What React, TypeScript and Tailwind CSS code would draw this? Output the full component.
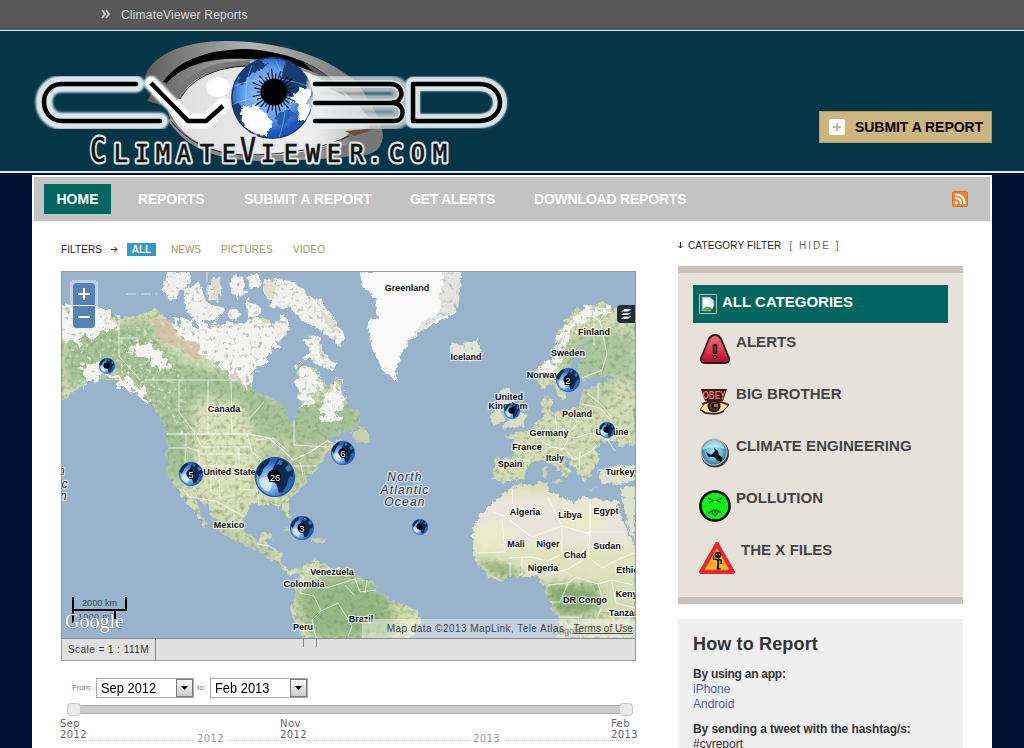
import React from "react";

const navItems = [
  { label: "REPORTS", width: "w-[106px]", tracking: "tracking-[-.2px]" },
  { label: "SUBMIT A REPORT", width: "w-[166px]", tracking: "tracking-[-.07px]" },
  { label: "GET ALERTS", width: "w-[124px]", tracking: "tracking-[-.3px]" },
  { label: "DOWNLOAD REPORTS", width: "w-[200px]", tracking: "tracking-[-.2px]" },
];

const letters: [string, number, number][] = [
  ["C", 98, 33], ["L", 121, 25], ["I", 142, 25], ["M", 163, 25], ["A", 184, 25], ["T", 207, 25],
  ["E", 229, 25], ["V", 248, 33], ["I", 268, 25], ["E", 291, 25], ["W", 313, 25], ["E", 334, 25],
  ["R", 357, 25], [".", 375, 25], ["C", 396, 25], ["O", 418, 25], ["M", 440, 25],
];

function Globe({ x, y, r, label }: { x: number; y: number; r: number; label?: string }) {
  return (
    <g transform={`translate(${x} ${y}) scale(${r / 20})`}>
      <circle r="19.5" fill="url(#globe)" stroke="#2350a0" strokeWidth="1.2" />
      <path d="M-19-4-16-11-10-17-5-18-6-14-11-9-13-4-16 0ZM0-13 3-18 9-17 14-13 18-6 18 0 15-1 13 3 12 8 8 15 4 16 2 9 0 5-3 3-4-4Z" fill="#0d2a50" />
      <path d="M14-13 17-7 13-5 10-9ZM4-17 8-16 6-12 2-13Z" fill="#3973b8" />
      <path d="M-16 2-9 0-4 4-3 9-6 15-11 13-15 8Z" fill="#e2f2ff" opacity=".75" />
      <circle cx="-1" cy="-1" r={label ? 6.5 : 8} fill="#010409" />
      {label ? (
        <text transform={`scale(${20 / r})`} y="3.5" textAnchor="middle" fontSize="9.5" fill="#fff" stroke="#000" strokeWidth="2" paintOrder="stroke" fontFamily="Liberation Sans, sans-serif">{label}</text>
      ) : null}
    </g>
  );
}

function Logo() {
  return (
    <svg className="block h-[140px] w-[520px]" viewBox="0 31 520 140">
      <defs>
        <linearGradient id="lid" x1="0" x2="1"><stop offset="0" stopColor="#5c5c5c" /><stop offset=".45" stopColor="#b4b4b4" /><stop offset=".75" stopColor="#8c8c8c" /><stop offset="1" stopColor="#666" /></linearGradient>
        <linearGradient id="white" x1="0" x2="1"><stop offset="0" stopColor="#dedede" /><stop offset=".7" stopColor="#f0f0f0" /><stop offset="1" stopColor="#b5b5b5" /></linearGradient>
        <radialGradient id="iris" cx=".45" cy=".45"><stop offset="0" stopColor="#9cc9ff" /><stop offset=".65" stopColor="#629dec" /><stop offset="1" stopColor="#1e55b8" /></radialGradient>
        <clipPath id="irisClip"><circle cx="272" cy="98" r="40" /></clipPath>
        <filter id="soft" x="-10%" y="-20%" width="120%" height="140%"><feGaussianBlur stdDeviation="1.2" /></filter>
        <filter id="rough"><feTurbulence type="fractalNoise" baseFrequency=".15" numOctaves="2" seed="2" result="n" /><feDisplacementMap in="SourceGraphic" in2="n" scale="9" xChannelSelector="R" yChannelSelector="G" /></filter>
      </defs>
      <path d="M145 76C154 52 190 40 230 41C286 42 330 59 355 81Q378 108 383 137C379 155 350 158 300 160Q215 166 184 138Q164 115 169 107L147 101 153 91Z" fill="url(#lid)" />
      <path d="M178 100C190 76 218 64 252 65C305 62 345 87 365 113Q382 130 352 130C336 151 292 158 240 157Q187 151 170 113Z" fill="url(#white)" />
      <path d="M163 82C180 57 215 49 247 49C290 52 320 66 336 84C309 67 282 60 245 59C207 57 181 67 167 83Z" fill="#000" />
      <path d="M177 98C187 76 211 64 250 63" fill="none" stroke="#777" strokeWidth="6" />
      <path d="M250 41Q276 41 299 50" fill="none" stroke="#333" strokeWidth="1" />
      <path d="M180 99C191 79 215 67 247 66" fill="none" stroke="#161616" strokeWidth="1" />
      <path d="M303 62Q329 72 346 96L332 90Z" fill="#777" opacity=".75" />
      <path d="M170 119Q191 152 239 157Q302 162 352 139" fill="none" stroke="#8c8c8c" strokeWidth="5" />
      <path d="M171 121Q195 152 242 155Q311 155 351 135" fill="none" stroke="#222" strokeWidth="1" />
      <path d="M350 132 382 128Q386 150 367 155L331 157 348 144Z" fill="#777" />
      <path d="M345 131 375 129 354 136Z" fill="#704d37" />
      <ellipse cx="218" cy="87" rx="12" ry="10" fill="#fff" />
      <circle cx="272" cy="98" r="41" fill="#1b377d" />
      <circle cx="272" cy="98" r="39.5" fill="url(#iris)" />
      <g clipPath="url(#irisClip)">
        <g filter="url(#rough)">
          <path d="M238 76 247 65 260 59 268 64 260 70 251 73 246 80 240 84ZM284 62 297 64 314 82 316 98 306 102 296 98 285 92 280 80ZM231 101 241 105 244 114 237 124 230 114Z" fill="#153d70" />
          <path d="M240 110 250 105 261 108 270 117 272 126 266 136 254 133 244 126ZM300 86 312 88 308 105 316 110 308 124 297 119 300 108 290 101Z" fill="#fff" />
          <path d="M277 114 290 108 295 113 288 122 281 127 275 121Z" fill="#2462ad" />
        </g>
        <path d="M232 87Q272 70 312 88M231 105Q270 88 315 107M252 65Q239 97 253 137M276 61Q294 98 278 141" fill="none" stroke="#d6ebff" strokeWidth=".6" opacity=".65" />
      </g>
      {Array.from({ length: 30 }, (_, i) => {
        const a = (i * Math.PI) / 15;
        const r = 17 + ((i * 7) % 5) * 1.6;
        return <path key={i} d={`M${274 + 11 * Math.cos(a)} ${92 + 11 * Math.sin(a)}L${274 + r * Math.cos(a)} ${92 + r * Math.sin(a)}`} stroke="#07142e" strokeWidth="1.2" />;
      })}
      <circle cx="274" cy="92" r="13.5" fill="#000" />
      {["M136 84H62C50 84 44 93 44 102S50 121 62 121H160", "M315 84H390C401 84 404 94 399 100C397 103 392 103 386 103H315M386 103H394C406 105 405 121 394 121H315", "M413 84H479C507 84 507 121 479 121H413V84Z"].map((d, i) => (
        <g key={i} fill="none" strokeLinecap="round" strokeLinejoin="round">
          <path d={d} stroke={i === 1 ? "#e9eeee" : "#dbe4e8"} strokeWidth={i === 2 ? "14" : "17"} opacity={i === 1 ? ".7" : "1"} filter="url(#soft)" />
          <path d={d} stroke={i === 1 ? "#e9eeee" : "#dbe4e8"} strokeWidth={i === 1 ? "8" : "14"} opacity=".7" />
          <path d={d} stroke="#000" strokeWidth="4.5" />
        </g>
      ))}
      <path d="M151 83 188 121H206L223 105" fill="none" stroke="#fff" strokeWidth="14" strokeLinecap="round" strokeLinejoin="round" filter="url(#soft)" />
      <path d="M151 83 188 121H206L223 106" fill="none" stroke="#000" strokeWidth="4.5" strokeLinejoin="round" />
      {letters.map(([c, x, s], i) => (
        <g key={i} transform={`translate(${x} 162) scale(${s > 30 ? ".8" : ".95"} 1)`} textAnchor="middle" fontSize={s} fontFamily="DejaVu Sans Mono, monospace" strokeLinejoin="round">
          <text fill="none" stroke="#dfe5e6" strokeWidth="5">{c}</text>
          <text fill="#111" stroke="#111" strokeWidth=".7">{c}</text>
        </g>
      ))}
    </svg>
  );
}

const northAmerica = "M60 307 80 306 98 307 118 317 132 316 143 313 157 310 163 318 177 325 203 330 213 325 237 323 247 333 253 315 270 320 277 333 270 350 260 365 252 373 250 383 257 393 273 400 285 407 287 417 293 425 297 413 300 407 297 387 298 367 313 367 320 377 327 387 337 378 343 397 350 407 358 413 360 425 353 432 345 430 338 434 327 438 330 445 341 440 333 451 325 455 320 465 310 475 305 485 290 497 287 502 291 517 288 518 282 505 270 505 250 505 243 518 245 532 257 543 263 533 272 533 267 542 268 550 282 552 280 563 290 570 303 568 300 573 290 574 277 563 267 555 253 548 237 542 220 532 217 523 207 505 193 498 200 511 207 527 198 518 188 502 175 488 167 472 167 455 168 437 163 423 157 413 147 400 133 387 113 380 97 377 80 387 60 403Z";
const southAmerica = "M303 568 305 565 317 560 332 568 350 568 356 576 372 580 378 592 395 602 418 610 420 621 408 640H305L296 626 290 612 293 602 297 591 298 583Z";
const africa = "M512 487 530 484 548 482 548 492 562 497 575 503 581 498 592 498 617 502 619 512 629 535 640 551V640H557L558 618 547 598 545 585 537 575 522 577 510 577 498 582 486 574 478 563 472 555 473 535 475 522 484 511 493 503Z";
const europe = "M495 459 515 457 513 442 505 437 519 432 532 430 542 417 543 397 552 398 552 414 578 407 582 393 598 383 618 380 608 376 582 379 579 366 580 350 591 342 579 346 571 362 568 387 563 400 557 393 553 383 542 390 535 377 538 365 553 358 558 333 567 319 575 310 590 306 602 303 622 310 640 323V443L623 446 612 440 600 443 595 449 600 458 594 469 590 475 585 482 578 472 571 463 565 457 558 457 568 466 572 472 564 477 558 469 551 465 545 458 532 462 528 465 524 478 505 482 493 480Z";
const greenland = "M360 271 362 287 375 297 378 317 368 323 370 337 373 350 382 370 395 380 402 350 422 330 442 320 457 312 455 297 462 271Z";
const arctic = "M166 271 188 271 191 282 180 292 171 302 163 290ZM184 289 199 282 203 297 211 305 224 309 219 319 200 321 185 311ZM208 286 215 275 221 285 219 301 210 300ZM229 285 233 275 243 277 246 292 236 300ZM247 276 258 272 261 285 250 289ZM263 285 269 277 277 278 275 298 266 300ZM273 297 279 279 295 282 307 295 320 300 332 316 345 337 340 348 322 331 305 323 290 308 269 307ZM273 325 284 314 290 326 282 340 273 342ZM247 298 259 307 260 315 248 317ZM302 341 318 334 321 349 337 364 332 371 315 362 304 358 311 348ZM228 311 237 308 241 317 231 320Z";

const countryLabels: [string, number, number][] = [
  ["Canada", 224, 412], ["Greenland", 407, 291], ["Iceland", 466, 360], ["Finland", 594, 335],
  ["Sweden", 568, 356], ["Norway", 543, 378], ["United", 509, 400], ["Kingdom", 508, 409],
  ["Poland", 577, 417], ["Germany", 549, 436], ["France", 527, 450], ["Italy", 555, 461],
  ["Spain", 510, 467], ["Ukraine", 612, 435], ["Turkey", 620, 475], ["United States", 232, 475],
  ["Mexico", 229, 528], ["Venezuela", 332, 575], ["Colombia", 304, 587], ["Peru", 303, 630],
  ["Brazil", 361, 622], ["Algeria", 525, 515], ["Libya", 570, 518], ["Egypt", 606, 514],
  ["Mali", 516, 547], ["Niger", 548, 547], ["Sudan", 607, 549], ["Chad", 575, 558],
  ["Nigeria", 543, 571], ["Ethiopia", 634, 573], ["DR Congo", 585, 603], ["Kenya", 629, 597],
  ["Tanzania", 628, 616],
];

function WorldMap() {
  return (
    <svg className="block h-[366px] w-[573px]" viewBox="62 272 573 366">
      <defs>
        <radialGradient id="globe" cx=".35" cy=".6"><stop offset="0" stopColor="#c9e4ff" /><stop offset=".5" stopColor="#76aef2" /><stop offset="1" stopColor="#2763bd" /></radialGradient>
        <clipPath id="landClip"><path d={[northAmerica, southAmerica, africa, europe].join(" ")} /></clipPath>
        <filter id="blurLand" x="-20%" y="-20%" width="140%" height="140%"><feGaussianBlur stdDeviation="5" /></filter>
        <filter id="coast" x="62" y="272" width="573" height="366" filterUnits="userSpaceOnUse">
          <feTurbulence type="fractalNoise" baseFrequency=".16" numOctaves="3" seed="5" result="n" />
          <feDisplacementMap in="SourceGraphic" in2="n" scale="8" xChannelSelector="R" yChannelSelector="G" />
        </filter>
        <filter id="relief" x="62" y="272" width="573" height="366" filterUnits="userSpaceOnUse">
          <feTurbulence type="fractalNoise" baseFrequency=".2" numOctaves="4" seed="8" result="n" />
          <feColorMatrix in="n" type="matrix" values="0 0 0 0 .2 0 0 0 0 .3 0 0 0 0 .14 1.6 0 0 0 -.75" result="m" />
          <feComposite in="m" in2="SourceGraphic" operator="in" />
        </filter>
        <filter id="peaks" x="62" y="272" width="573" height="366" filterUnits="userSpaceOnUse">
          <feTurbulence type="fractalNoise" baseFrequency=".25" numOctaves="3" seed="12" result="n" />
          <feColorMatrix in="n" type="matrix" values="0 0 0 0 .95 0 0 0 0 .95 0 0 0 0 .92 0 5 0 0 -2.85" result="m" />
          <feComposite in="m" in2="SourceGraphic" operator="in" />
        </filter>
        <filter id="lakes" x="62" y="272" width="573" height="366" filterUnits="userSpaceOnUse">
          <feTurbulence type="fractalNoise" baseFrequency=".24" numOctaves="3" seed="20" result="n" />
          <feColorMatrix in="n" type="matrix" values="0 0 0 0 .4 0 0 0 0 .45 0 0 0 0 .48 0 4 0 0 -2.35" result="m" />
          <feComposite in="m" in2="SourceGraphic" operator="in" />
        </filter>
        <filter id="snow" x="62" y="272" width="573" height="366" filterUnits="userSpaceOnUse">
          <feTurbulence type="fractalNoise" baseFrequency=".12" numOctaves="3" seed="3" result="n" />
          <feDisplacementMap in="SourceGraphic" in2="n" scale="22" xChannelSelector="R" yChannelSelector="G" />
        </filter>
      </defs>
      <path d="M62 272H635V638H62Z" fill="#99b3cc" />
      <g filter="url(#coast)">
        <g clipPath="url(#landClip)">
          <path d="M62 272H635V638H62Z" fill="#d3dcb5" />
          <g filter="url(#blurLand)">
            <path d="M65 335 146 320 176 362 230 375 275 400 360 405 365 435 315 445 258 437 240 402 193 395 207 445 200 485 163 480 158 410 120 375 65 385Z" fill="#a5c397" />
            <path d="M193 408 238 405 255 440 255 500 215 505 193 480Z" fill="#dbe1b9" />
            <path d="M260 448 325 440 325 460 290 496 261 492Z" fill="#b6cb9f" />
            <path d="M205 510 235 535 280 555 265 560 210 530Z" fill="#b4c89b" />
            <path d="M297 588 335 575 375 585 398 605 390 638 315 638 300 612Z" fill="#95b985" />
            <path d="M393 600 425 605 415 640 396 637Z" fill="#d5dcae" />
            <path d="M462 520 500 487 620 490 645 545 635 580H470Z" fill="#dfe3bd" />
            <path d="M462 516 492 496 620 493 638 541 620 547 480 547Z" fill="#eae5da" />
            <path d="M475 525 510 522 515 545 480 550ZM560 512 600 505 600 530 570 529Z" fill="#ebebc8" />
            <path d="M475 558 520 568 510 579 485 570ZM550 583 598 586 598 612 562 616 548 598Z" fill="#83ad70" />
            <path d="M560 350 585 330 635 332 635 383 610 377 570 388Z" fill="#acc79e" />
            <path d="M581 380 617 385 605 408 565 410Z" fill="#bdd0a7" />
          </g>
        </g>
      </g>
      <g filter="url(#relief)">
        <path d={northAmerica} /><path d={southAmerica} /><path d={europe} /><path d="M475 560 520 566 548 583 600 583 600 612 635 612V638H557L558 618 547 598 537 575 500 580Z" />
      </g>
      <path d="M120 324 157 330 186 380 188 420 196 450 186 455 172 415 140 390ZM65 345 120 335 140 360 140 380 110 373 80 380Z" filter="url(#peaks)" opacity=".55" />
      <g filter="url(#snow)" fill="#f3f3f0">
        <path d="M62 308 88 306 115 316 119 328 100 333 78 341 62 345Z" />
        <path d="M170 318 214 326 253 318 270 322 279 335 272 351 254 370 250 386 235 382 225 369 208 361 194 342 180 332Z" />
        <path d="M300 366 317 371 322 386 309 404 301 409 298 390ZM323 398 340 382 345 412 330 420 317 412ZM122 347 147 345 162 351 169 365 162 374 148 356ZM83 366 101 359 114 375 134 381 150 397 147 402 128 386 100 376 85 385Z" />
        <path d="M539 368 556 359 560 335 580 311 610 305 618 311 600 311 572 330 559 364 542 382Z" />
      </g>
      <path d="M62 308 88 306 115 316 119 328 100 333 78 341 62 345ZM170 318 214 326 253 318 270 322 279 335 272 351 254 370 250 386 235 382 225 369 208 361 194 342 180 332ZM300 366 317 371 322 386 309 404 301 409 298 390ZM323 398 340 382 345 412 330 420 317 412ZM539 368 556 359 560 335 580 311 610 305 600 311 572 330 559 364Z" filter="url(#lakes)" />
      <path d="M149 319 166 322 181 338 205 354 199 362 184 349 159 340ZM232 369 246 385 232 382Z" fill="#d9bda5" opacity=".7" filter="url(#snow)" />
      <g filter="url(#coast)">
        <path d={arctic} fill="#f1f1ee" />
        <path d="M213 279 219 276 222 286 218 300 211 298ZM266 282 274 278 274 298 266 296ZM313 305 329 316 340 332 331 330ZM317 342 326 356 321 358Z" fill="#e1dfca" />
        <path d={greenland} fill="#fafafa" />
        <path d="M444 273 461 272 457 310 437 320 416 334 405 346 421 324 440 312 441 295Z" fill="#e3e4df" />
        <path d="M452 342 462 346 466 342 478 340 482 352 466 361 456 357 450 350Z" fill="#e3e4d9" />
        <path d="M498 394 508 388 514 396 509 403 519 411 527 418 523 426 502 429 506 421 511 416 502 410ZM491 414 500 409 505 418 494 427 489 420Z" fill="#d7dec4" />
        <path d="M361 427 371 435 370 443 356 441 351 435ZM313 539 325 538 324 543 313 542ZM281 530 291 527 304 533 299 535Z" fill="#c5d0ac" />
        <path d="M598 471 612 467 635 467V480L620 484 603 483ZM621 488 635 485V541L627 526Z" fill="#dfe2ca" />
        <path d="M542 468 548 467 547 478 543 477ZM552 481 563 479 561 484ZM584 488 597 489 590 491Z" fill="#c5d0ac" />
      </g>
      <g filter="url(#lakes)"><path d={arctic} /><path d="M440 272H462V312L435 320 410 345 402 345 425 324 439 312ZM360 273 365 290 379 302 377 318 369 324 374 350 392 377 382 371 369 346 366 321ZM450 340H484V361H450Z" /></g>
      <g fill="none" stroke="#fff" strokeWidth=".8" opacity=".9">
        <path d="M119 320V356L140 380M119 338H138V350M145 380H238M179 380V412L195 433M208 380V434M231 380 232 435" />
        <path d="M167 434H249L269 438 284 451 293 460 310 452 327 441 336 444" strokeWidth="1.2" />
        <path d="M168 448H186L184 476 197 491M186 434V447L199 451V466H236M196 435 202 447H251M200 454H246M201 478H239M239 448V480M211 466V492M219 480 220 499M247 433 252 452 261 460 258 481 272 490M183 489 190 497 216 501 232 510 245 517M238 489 257 490 259 504M265 466H316M265 489 294 481M275 467 276 503M287 470 289 488M300 462 303 475M256 440 274 438 285 449M249 419 264 402M294 421 294 445 327 447" />
        <path d="M257 544 269 546 276 550M304 576 300 593 314 596 321 611 312 620 316 638M316 561 312 572 326 588 339 584 355 579 360 592 376 590M321 611 338 603 352 626 348 637M367 580 365 593M354 595 345 585" />
        <path d="M512 489 513 507 504 516 532 537 562 526 548 497M502 519 505 552 478 553M504 516 493 512M562 526 562 554 547 561 531 557 509 558M562 526 590 534 590 500M590 534 588 557 568 569 546 575M587 532H624M588 557 602 568 621 558 635 553M548 585 568 583 576 577 598 584 612 580 633 585M568 583 560 602 550 602M598 584 604 602 598 616M558 617 578 617 581 638M612 582 616 603 635 608M510 577V562M522 575V558M530 575V559" />
        <path d="M557 367 554 352 562 333 576 316 589 314 600 321 607 354 602 370 582 378M594 345V316M600 320 605 312M555 414 557 432 568 440 562 450 546 444 530 430M558 433 575 438 590 433 607 438 611 420 600 408 582 404M515 458 530 461M540 455 550 447 565 449 574 460 590 452 597 445M580 452 579 469M598 384 598 401 611 416M574 408 577 424 566 436M587 393 599 403M607 439 615 451" />
      </g>
      <path d="M126 294H157M207 272V312" stroke="#d8e1e9" strokeWidth="1" strokeDasharray="10 5" />
      <g fontFamily="Liberation Sans, sans-serif" fontSize="9" fontWeight="700" textAnchor="middle" fill="#111" stroke="#fff" strokeOpacity=".65" strokeWidth="2.5" strokeLinejoin="round" paintOrder="stroke">
        {countryLabels.map(([name, x, y]) => <text key={name} x={x} y={y}>{name}</text>)}
      </g>
      <g fontFamily="Liberation Sans, sans-serif" fontSize="12" fontStyle="italic" textAnchor="middle" letterSpacing="1.2" fill="#2e3650" stroke="#e6edf4" strokeOpacity=".8" strokeWidth="2.5" paintOrder="stroke">
        <text x="405" y="481">North</text><text x="405" y="494">Atlantic</text><text x="405" y="506">Ocean</text>
        <text x="62" y="475">n</text><text x="65" y="488">c</text><text x="64" y="500">n</text>
      </g>
      <text x="567" y="634" fontFamily="Liberation Sans, sans-serif" fontSize="9" textAnchor="middle" fill="#222">Angola</text>
      <Globe x={107} y={366} r={8} /><Globe x={343} y={453} r={12} label="6" />
      <Globe x={568} y={380} r={12} label="2" /><Globe x={512} y={411} r={8} />
      <Globe x={607} y={430} r={8} /><Globe x={191} y={474} r={12} label="5" />
      <Globe x={275} y={477} r={20} label="26" /><Globe x={302} y={528} r={12} label="3" />
      <Globe x={420} y={527} r={8} />
      <path d="M73 597V610H126V597M73 610V623M115 610V619" stroke="#000" strokeWidth="2" fill="none" />
      <g fontFamily="Liberation Sans, sans-serif" fontSize="9" fill="#38414a"><text x="82" y="606" textLength="35">2000 km</text><text x="78" y="620" textLength="34" opacity=".8">1000 mi</text></g>
      <text x="65" y="628" fontFamily="Liberation Serif, serif" fontSize="22" textLength="59" lengthAdjust="spacingAndGlyphs" fill="#fff" stroke="#718496" strokeWidth="1.2" paintOrder="stroke">Google</text>
    </svg>
  );
}

function CategoryIcon({ kind }: { kind: string }) {
  return (
    <svg className={kind === "alien" ? "h-8 w-9 shrink-0" : "h-8 w-8 shrink-0"} viewBox={kind === "alien" ? "0 0 36 32" : "0 0 32 32"}>
      {kind === "alert" && <>
        <defs><linearGradient id="red" x2="0" y2="1"><stop stopColor="#ec7180" /><stop offset=".5" stopColor="#df3e57" /><stop offset="1" stopColor="#af0729" /></linearGradient></defs>
        <path d="M16 1Q20 1 22 5L30 24Q31 29 26 29H6Q1 29 2 24L10 5Q12 1 16 1Z" fill="url(#red)" stroke="#2b1c1b" strokeWidth="1.8" />
        <path d="M14.5 11H17.5V19H14.5Z" fill="#843d3c" stroke="#171a16" strokeWidth="1.4" /><circle cx="16" cy="23" r="1.7" fill="#843d3c" stroke="#171a16" />
      </>}
      {kind === "eye" && <>
        <path d="M2 3 28 3 24 15H6Z" fill="#3a1711" />
        <text x="3.5" y="12.5" fontSize="11" fontFamily="Liberation Sans, sans-serif" textLength="23" lengthAdjust="spacingAndGlyphs" fill="#df8069">OBEY</text>
        <path d="M1 24 5 18 11 16 22 16 30 19 24 25 18 28 8 27Z" fill="#eedaaa" stroke="#8c3e2d" />
        <path d="M3 18Q15 12 30 19" fill="none" stroke="#612a20" strokeWidth="2" /><circle cx="15" cy="20" r="6.5" fill="#241b17" /><circle cx="15" cy="20" r="3.8" fill="none" stroke="#7c493b" /><path d="M15 18H19V21H15Z" fill="#a36b58" /><path d="M2 24 6 27 14 28 21 27 25 25" fill="none" stroke="#4a1f17" strokeWidth="1.5" />
      </>}
      {kind === "wrench" && <>
        <defs><radialGradient id="cyan"><stop stopColor="#a8edfb" /><stop offset=".6" stopColor="#75bcd6" /><stop offset="1" stopColor="#3d7b9d" /></radialGradient></defs>
        <circle cx="16" cy="15.5" r="14" fill="#353f43" /><circle cx="15" cy="14" r="13.5" fill="#b3bcc0" /><circle cx="15" cy="14" r="12.3" fill="url(#cyan)" /><path d="M3 12Q15 7 26 11Q23 1 14 2Q6 3 3 12Z" fill="#e4fbff" opacity=".55" />
        <path d="M7 14 12 17 16 13 15 10 19 13 20 17 24 20 22 24 18 22 15 19 10 19 8 17Z" fill="#061417" />
      </>}
      {kind === "sick" && <>
        <circle cx="16" cy="16" r="14.6" fill="#0cf313" stroke="#000" strokeWidth="2.5" />
        <path d="m9 8 5 2.5-4 2.5m13-5-5 2.5 4 2.5M9 24q7-8 14 0M13.5 21v2.5q2.5 4 5 0v-2.5m-2.5 0v2.5" fill="none" stroke="#063d09" strokeWidth="1.2" />
      </>}
      {kind === "alien" && <>
        <path d="M18 2 34 30H2Z" fill="#ffae29" stroke="#eb262c" strokeWidth="4" strokeLinejoin="round" />
        <ellipse cx="19" cy="13" rx="3.3" ry="3.2" fill="#161309" /><path d="M17.8 17H20.2V21L20 26H17.8L18.3 21Z" fill="#151208" /><path d="M19 17 22 18 22 22M18 17.5 14.5 17V13.5M17.5 26.7H21.5" fill="none" stroke="#151208" strokeWidth="1.4" /><path d="m17 12 1 1m3-1-1 1" stroke="#eab22e" />
      </>}
    </svg>
  );
}

function DateSelect({ value }: { value: string }) {
  return (
    <div className="flex h-5 w-[98px] border border-[#aaa] bg-white">
      <span className="w-[79px] whitespace-nowrap pl-1 text-[14px] leading-[18px] text-black"><span className="inline-block origin-left scale-x-[.92]">{value}</span></span>
      <span className="flex w-[17px] items-center justify-center border border-[#777] bg-gradient-to-b from-white to-[#ccc]"><svg className="h-1 w-[7px]" viewBox="0 0 7 4"><path d="M0 0H7L3.5 4Z" fill="#000" /></svg></span>
    </div>
  );
}

const categories = [
  ["ALERTS", "alert"], ["BIG BROTHER", "eye"], ["CLIMATE ENGINEERING", "wrench"], ["POLLUTION", "sick"], ["THE X FILES", "alien"],
];

export default function App() {
  return (
    <div className="flex h-[748px] w-[1024px] flex-col overflow-hidden bg-[#001233] font-['Liberation_Sans',Arial,sans-serif] text-[#333]">
      <div className="flex h-[30px] shrink-0 items-center bg-[#585858] pl-[101px] text-[12px] tracking-[.2px] text-[#d7d7d7]">
        <svg className="mr-[10px] -mt-[3px] h-[10px] w-[10px]" viewBox="0 0 10 10"><path d="m1 1 3 4-3 4M5 1l3 4-3 4" fill="none" stroke="#ccc" strokeWidth="1.9" /></svg>
        ClimateViewer Reports
      </div>
      <header className="flex h-[143px] shrink-0 border-y border-b-2 border-[#e5e8e9] bg-[#043648]">
        <Logo />
        <button className="ml-[299px] mt-[80px] flex h-8 w-[173px] items-center border border-[#ad9a68] bg-[#ceb47f] pl-[9px] text-[14px] font-bold text-black">
          <svg className="mr-[10px] h-4 w-4 shrink-0" viewBox="0 0 16 16"><rect width="16" height="16" rx="2" fill="#fff" /><path d="M4 8H12M8 4V12" stroke="#ceb47f" strokeWidth="2" /></svg>
          <span className="whitespace-nowrap tracking-[-.05px]">SUBMIT A REPORT</span>
        </button>
      </header>
      <main className="ml-8 mt-[2px] h-[573px] w-[960px] bg-white pt-[2px]">
        <nav className="mx-[2px] flex h-[44px] items-center bg-[#c3c3c3] pl-[10px] text-[14px] font-bold text-white">
          <div className="mr-[27px] flex h-[30px] w-[67px] items-center justify-center bg-[#006660]">HOME</div>
          {navItems.map(({ label, width, tracking }) => <div key={label} className={`${width} ${tracking} whitespace-nowrap`}>{label}</div>)}
          <svg className="ml-[218px] h-4 w-4" viewBox="0 0 16 16"><rect width="16" height="16" rx="2" fill="#f28334" /><rect x=".5" y=".5" width="15" height="15" rx="2" fill="none" stroke="#d97235" /><circle cx="4.2" cy="11.8" r="1.6" fill="#fff" /><path d="M3 7Q9 7 9 13M3 3.5Q12.5 3.5 12.5 13" fill="none" stroke="#fff" strokeWidth="2" /></svg>
        </nav>
        <div className="flex pl-[29px]">
          <section className="w-[575px]">
            <div className="flex h-[50px] items-center pt-[7px] text-[10px]">
              <span className="w-[50px] tracking-[.1px] text-[#222]">FILTERS</span>
              <svg className="mr-[9px] h-[7px] w-[7px]" viewBox="0 0 7 7"><path d="M0 3.5H6M3.5 1 6 3.5 3.5 6" fill="none" stroke="#222" /></svg>
              <span className="mr-[15px] flex h-[13px] w-[29px] items-center justify-center bg-[#3399cc] font-bold text-white">ALL</span>
              <span className="w-[50px] text-[#999966]">NEWS</span><span className="w-[72px] tracking-[.15px] text-[#999966]">PICTURES</span><span className="tracking-[.2px] text-[#999966]">VIDEO</span>
            </div>
            <div className="h-[390px] border border-[#999] bg-[#e0e0e0]">
              <div className="relative h-[366px] overflow-hidden">
                <WorldMap />
                <div className="absolute left-[8px] top-2 h-[38px] w-[28px] rounded bg-white/40" />
                <div className="absolute left-[11px] top-[11px]">
                  <div className="flex h-[23px] w-[22px] items-center justify-center rounded-t border-b border-white bg-[#5682b5]"><svg className="h-3 w-3" viewBox="0 0 12 12"><path d="M6 0V12M0 6H12" stroke="#fff" strokeWidth="2" /></svg></div>
                  <div className="flex h-[22px] w-[22px] items-center justify-center rounded-b bg-[#5682b5]"><svg className="h-3 w-3" viewBox="0 0 12 12"><path d="M0 6H12" stroke="#fff" strokeWidth="2" /></svg></div>
                </div>
                <div className="absolute right-0 top-[33px] flex h-[18px] w-[18px] items-center justify-center rounded-l bg-[#222b36]"><svg className="h-3 w-3" viewBox="0 0 12 12"><path d="M1 3.6 4.5 1H11.5L8 3.6ZM1 7.1 3.5 5.2H8.5L11.5 4.3 8 7.1ZM1 10.7 3.5 8.8H8.5L11.5 7.9 8 10.7Z" fill="#fff" /></svg></div>
                <div className="absolute bottom-0 right-0 flex h-[19px] w-[273px] items-center justify-end whitespace-nowrap bg-white/40 pr-[2px] text-[10px] text-[#444]"><span className="mr-[9px] tracking-[.44px]">Map data ©2013 MapLink, Tele Atlas</span><span className="tracking-[.05px] underline">Terms of Use</span></div>
              </div>
              <div className="flex h-[22px] border-t border-[#888] text-[10px] tracking-[.45px]">
                <div className="w-[94px] whitespace-nowrap border-r border-[#888] pl-[6px] leading-[21px]">Scale = 1 : 111M</div>
                <div className="ml-[147px] h-2 w-[14px] border-x border-[#888]" />
              </div>
            </div>
            <div className="mt-[17px] flex items-center pl-[11px] text-[8px] text-[#777]"><span className="w-6 tracking-[-.2px]">From:</span><DateSelect value="Sep 2012" /><span className="w-4 pl-[3px]">to:</span><DateSelect value="Feb 2013" /></div>
            <div className="mt-[5px] flex h-[13px] items-center pl-[6px]">
              <div className="relative h-[9px] w-[566px] border-y border-[#aaa] bg-[#cdcdcd]">
                <div className="absolute -top-[3px] left-0 h-[13px] w-[14px] rounded border border-[#ccc] bg-[#eaeaea]" />
                <div className="absolute -top-[3px] right-0 h-[13px] w-[14px] rounded border border-[#ccc] bg-[#eaeaea]" />
              </div>
            </div>
            <div className="relative mt-[2px] h-[28px] font-['DejaVu_Sans',sans-serif] text-[10px] leading-[11px] tracking-[.4px] text-[#666]">
              <div className="flex justify-between"><span className="-ml-px w-[220px]">Sep<br />2012</span><span className="w-[331px]">Nov<br />2012</span><span className="-mr-[2px] w-[27px]">Feb<br />2013</span></div>
              <div className="absolute inset-x-[7px] top-[22px] border-t border-dotted border-[#ccc]" />
              <span className="absolute left-[132px] top-[15px] bg-white px-1 text-[#999]">2012</span>
              <span className="absolute left-[408px] top-[15px] bg-white px-1 text-[#999]">2013</span>
            </div>
          </section>
          <aside className="ml-[42px] w-[285px]">
            <div className="flex h-[45px] items-center pt-[3px] text-[10px] text-[#222]"><svg className="mr-[5px] h-[7px] w-[5px]" viewBox="0 0 5 7"><path d="M2.5 0V6M0 3.5 2.5 6 5 3.5" fill="none" stroke="#222" /></svg><span className="tracking-[.13px]">CATEGORY FILTER</span><span className="ml-[8px] tracking-[2px] text-[#666]">[ HIDE ]</span></div>
            <div className="h-[338px] border-y-[7px] border-[#c8c2bb] bg-[#e6e2da] px-[15px] pt-3">
              <div className="flex h-[38px] items-start bg-[#006660] pl-[6px] pt-[9px] text-[15px] font-bold leading-4 text-white">
                <svg className="mr-[5px] h-5 w-[18px]" viewBox="0 0 18 20"><path d="M.5.5H17.5V19.5H.5Z" fill="none" stroke="#b8c6be" /><path d="M3 3H11L15 7V17H3Z" fill="#e9f1fc" stroke="#6789aa" /><path d="M4 8Q7 3 10 8L8 10H4Z" fill="#fff" /><path d="M3 16.5Q8 9 15 16.5Z" fill="#57a943" /><path d="m11 18 5-7v7Z" fill="#006660" /><path d="M11 3V7H15" fill="#c6d8ef" /></svg>
                ALL CATEGORIES
              </div>
              {categories.map(([name, kind]) => <div key={name} className="flex h-[52px] items-start gap-[5px] pl-[6px] pt-[11px] text-[15px] font-bold leading-4 tracking-[.05px] text-[#444]"><CategoryIcon kind={kind} /><span className={kind === "alien" ? "pl-px" : ""}>{name}</span></div>)}
            </div>
            <div className="mt-[15px] h-[144px] overflow-hidden bg-[#efefef] px-[15px] pt-[15px] text-[12px] leading-[15px]">
              <h2 className="mb-3 text-[18px] font-bold leading-[21px] tracking-[.15px]">How to Report</h2>
              <strong className="block tracking-[-.25px]">By using an app:</strong><a className="block text-[#5360a9]">iPhone</a><a className="block text-[#5360a9]">Android</a>
              <strong className="mt-[10px] block tracking-[-.08px]">By sending a tweet with the hashtag/s:</strong><span>#cvreport</span>
            </div>
          </aside>
        </div>
      </main>
    </div>
  );
}
